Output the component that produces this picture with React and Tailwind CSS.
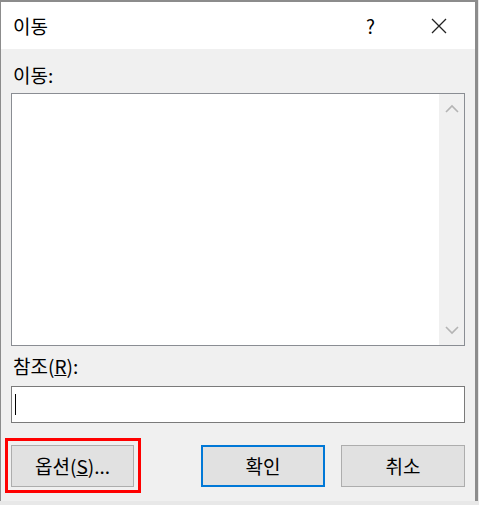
import React from 'react'

const font = { fontFamily: '"Noto Sans CJK KR", "Noto Sans", sans-serif' }

const Chevron = ({ up }) => (
  <svg width="14" height="9" viewBox="0 0 14 9" className="block">
    <path
      d={up ? 'M1 8 L7 2 L13 8' : 'M1 1 L7 7 L13 1'}
      fill="none"
      stroke="#b4b4b4"
      strokeWidth="1.6"
    />
  </svg>
)

const Button = ({ children, primary }) => (
  <button
    className={
      primary
        ? 'h-[42px] w-[124px] bg-[#e1e1e1] border-2 border-[#0078d7] text-[19px] text-black flex items-center justify-center'
        : 'h-[42px] w-[124px] bg-[#e1e1e1] border border-[#adadad] text-[19px] text-black flex items-center justify-center'
    }
  >
    {children}
  </button>
)

export default function App() {
  return (
    <div className="w-[479px] h-[505px] bg-[#e8e8e8] overflow-hidden" style={font}>
      <div className="w-[478px] h-[501px] border-l border-r-[3px] border-t-2 border-[#8c8c8c] flex flex-col">
        {/* title bar */}
        <div className="h-[47px] bg-white flex items-center pl-[12px] shrink-0">
          <span className="text-[19px] text-black leading-none">이동</span>
          <span className="ml-auto text-[19px] text-black leading-none mr-[56px]">?</span>
          <svg width="16" height="16" viewBox="0 0 16 16" className="mr-[28px]">
            <path d="M1 1 L15 15 M15 1 L1 15" stroke="#222" strokeWidth="1.3" />
          </svg>
        </div>

        {/* body */}
        <div className="flex-1 bg-[#f0f0f0] px-[10px] pt-[14px] relative">
          <div className="h-[24px] leading-[24px] text-[19px] text-black pl-[2px]">이동:</div>

          <div className="mt-[6px] h-[253px] border border-[#8a8d93] bg-white flex">
            <div className="flex-1" />
            <div className="w-[25px] bg-[#f0f0f0] flex flex-col items-center justify-between py-[10px]">
              <Chevron up />
              <Chevron />
            </div>
          </div>

          <div className="mt-[8px] h-[24px] leading-[24px] text-[19px] text-black pl-[2px]">
            참조(<span className="underline">R</span>):
          </div>

          <div className="mt-[8px] h-[37px] border border-[#7a7a7a] bg-white flex items-center pl-[3px]">
            <div className="w-px h-[21px] bg-black" />
          </div>

          <div className="mt-[22px] flex items-center">
            <Button>
              옵션(<span className="underline">S</span>)...
            </Button>
            <div className="ml-[67px]">
              <Button primary>확인</Button>
            </div>
            <div className="ml-[16px]">
              <Button>취소</Button>
            </div>
          </div>

          <div className="absolute left-[4px] top-[389px] w-[136px] h-[55px] border-[3px] border-[#ff0000] pointer-events-none" />
        </div>
      </div>
    </div>
  )
}
